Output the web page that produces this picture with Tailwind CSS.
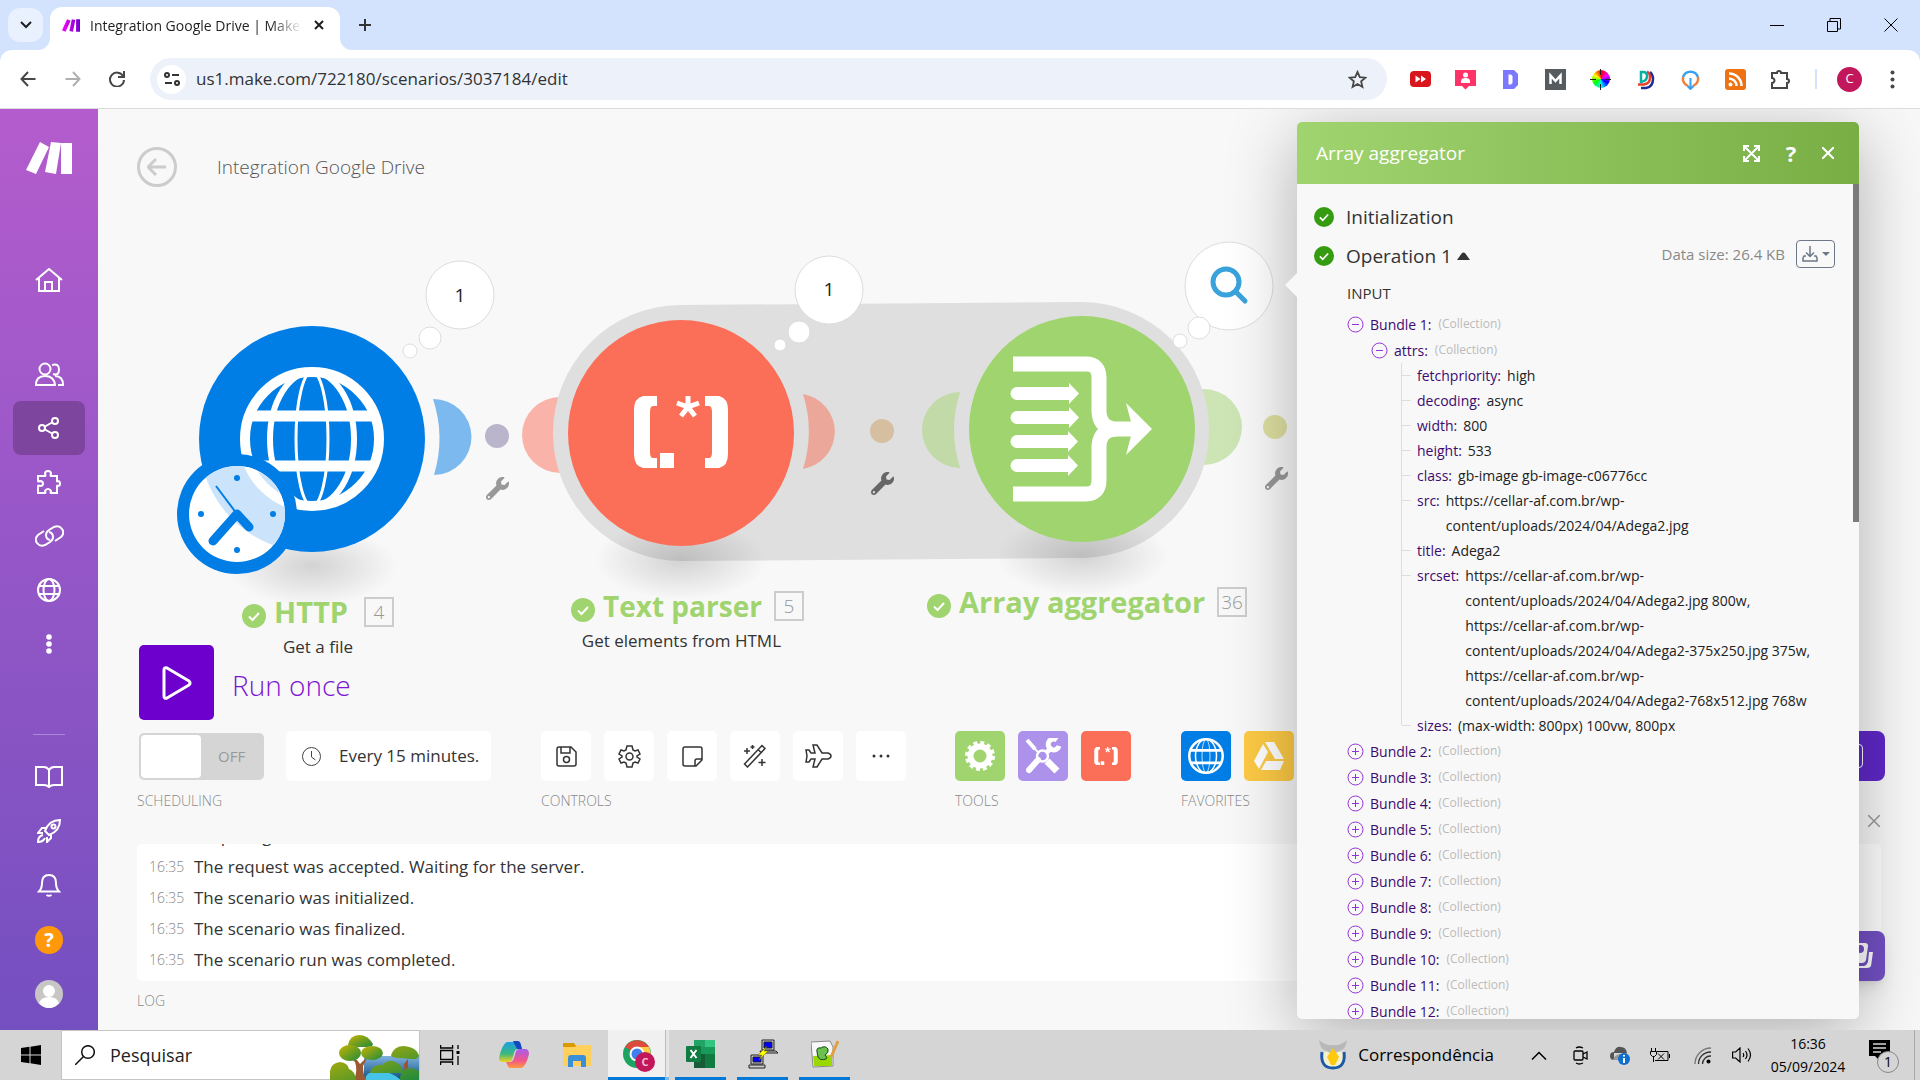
<!DOCTYPE html>
<html lang="en">
<head>
  <meta charset="UTF-8" />
  <title>Integration Google Drive | Make</title>
  <script src="https://cdn.jsdelivr.net/npm/@tailwindcss/browser@4"></script>
</head>
<body class="h-screen flex flex-col overflow-hidden bg-[#d3e3fd] text-[#333] font-['Open_Sans','Noto_Sans',sans-serif]">

  <!-- Shared symbols -->
  <svg class="hidden">
    <symbol id="check" viewBox="0 0 24 24"><circle cx="12" cy="12" r="12" fill="currentColor"/><path d="M7 12.500l3.500 3.500 6.500-7" fill="none" stroke="#fff" stroke-width="2"/></symbol>
    <symbol id="globe" viewBox="-72 -72 144 144">
      <g fill="none" stroke="#fff"><circle r="67" stroke-width="10"/><ellipse rx="42" ry="67" stroke-width="6"/><ellipse rx="16" ry="67" stroke-width="3"/><path d="M-62-23H62M-62 27H62" stroke-width="11"/></g>
    </symbol>
    <symbol id="parser" viewBox="-47 -36 94 72">
      <g fill="#fff"><path d="M-24-36H-38Q-47-34-47-22V22Q-47 34-38 36H-24V26H-28Q-31 26-31 20V-20Q-31-26-28-26H-24z"/><path d="M24-36H38Q47-34 47-22V22Q47 34 38 36H24V26H28Q31 26 31 20V-20Q31-26 28-26H24z"/><path d="M-21 21h14v15h-14z"/></g>
      <path d="M7-25V-36M7-25L-4-29M7-25L18-29M7-25L0-16M7-25L14-16" stroke="#fff" stroke-width="5" fill="none"/>
    </symbol>
    <symbol id="wrench" viewBox="0 0 512 512"><path fill="currentColor" d="M507.700 109.100c-2.200-9-13.500-12.100-20.100-5.500l-74.400 74.400-67.900-11.300L334 98.900l74.400-74.400c6.600-6.600 3.400-17.900-5.700-20.200-47.400-11.700-99.600.9-136.600 37.900-39.600 39.600-50.500 97.100-34.100 147.200L18.700 402.800c-25 25-25 65.500 0 90.500 25 25 65.500 25 90.500 0l213.200-213.200c50.100 16.700 107.500 5.700 147.400-34.200 37.100-37.100 49.700-89.300 37.900-136.800zM64 472c-13.200 0-24-10.800-24-24s10.700-24 24-24 24 10.700 24 24-10.700 24-24 24z"/></symbol>
  </svg>

  <!-- Tab strip -->
  <header class="h-[50px] shrink-0 flex items-end">
    <button class="ml-2 mb-2 w-[35px] h-[34px] rounded-xl bg-[#e9f0fe] flex items-center justify-center" aria-label="Search tabs">
      <svg class="w-3 h-2" viewBox="0 0 12 8" fill="none" stroke="#1f1f1f" stroke-width="2"><path d="M1 1l5 5 5-5"/></svg>
    </button>
    <div class="relative ml-[7px] w-[290px] h-[43px] pl-3 pr-3 pb-[7px] bg-white rounded-t-xl flex items-center">
      <svg class="w-[18px] h-[13px] shrink-0" viewBox="0 0 46 32"><defs><linearGradient id="mk"><stop offset="0" stop-color="#f0f"/><stop offset="1" stop-color="#6d00cc"/></linearGradient></defs><path fill="url(#mk)" d="M13 0l9 4-13 28-9-4zM25 0l9 2-6 30-9-2zM36 0h10v32H36z"/></svg>
      <span class="ml-[10px] w-[212px] text-[14px] text-[#1f1f1f] whitespace-nowrap overflow-hidden mask-r-from-85%">Integration Google Drive | Make</span>
      <button aria-label="Close tab" class="ml-3"><svg class="w-[10px] h-[10px]" viewBox="0 0 10 10" stroke="#1f1f1f" stroke-width="2"><path d="M1 1l8 8M9 1L1 9"/></svg></button>
      <svg class="absolute -left-3 bottom-0 size-3" viewBox="0 0 12 12" fill="#fff"><path d="M12 0V12H0A12 12 0 0 0 12 0"/></svg>
      <svg class="absolute -right-3 bottom-0 size-3" viewBox="0 0 12 12" fill="#fff"><path d="M0 0V12H12A12 12 0 0 1 0 0"/></svg>
    </div>
    <button aria-label="New tab" class="ml-[18px] mb-[18px]"><svg class="size-[14px]" viewBox="0 0 14 14" stroke="#333" stroke-width="2"><path d="M7 1v12M1 7h12"/></svg></button>
    <div class="ml-auto mb-[18px] mr-[22px] flex items-center gap-[43px]">
      <svg class="size-[14px]" viewBox="0 0 14 14" stroke="#000"><path d="M0 7.500h14"/></svg>
      <svg class="size-[14px]" viewBox="0 0 14 14" stroke="#000" fill="none"><path d="M.5 3.500h10v10h-10zM3 3V.500h10.500V11H11"/></svg>
      <svg class="size-[14px]" viewBox="0 0 14 14" stroke="#000"><path d="M.5.500l13 13M13.500.500l-13 13"/></svg>
    </div>
  </header>

  <!-- Toolbar -->
  <nav class="h-[59px] shrink-0 bg-white rounded-t-xl border-b border-[#dcdcdc] flex items-center pl-5 pr-[25px]">
    <svg class="size-4" viewBox="0 0 16 16" fill="none" stroke="#474747" stroke-width="2"><path d="M15.500 8H1.500M8 1L1.500 8 8 15"/></svg>
    <svg class="size-4 ml-[29px]" viewBox="0 0 16 16" fill="none" stroke="#b0b0b0" stroke-width="2"><path d="M.5 8h14M8 1l6.500 7L8 15"/></svg>
    <svg class="size-4 ml-[28px]" viewBox="0 0 16 16" fill="none" stroke="#474747" stroke-width="2"><path d="M14 5A7 7 0 1 0 15 9"/><path d="M15 0v6H9"/></svg>
    <div class="ml-[25px] flex-1 h-[42px] rounded-full bg-[#ecf1fa] flex items-center pl-[7px] pr-5">
      <span class="size-[29px] rounded-full bg-white flex items-center justify-center">
        <svg class="size-4" viewBox="0 0 16 16" fill="none" stroke="#333" stroke-width="2"><circle cx="3" cy="4" r="2"/><path d="M8 4h7M1 12h7"/><circle cx="13" cy="12" r="2"/></svg>
      </span>
      <input aria-label="Address" class="ml-[10px] flex-1 text-[17px] text-[#333] outline-none" value="us1.make.com/722180/scenarios/3037184/edit" />
      <svg class="size-[19px]" viewBox="0 0 24 24" fill="none" stroke="#474747" stroke-width="2.300"><path d="M12 2.500l2.900 6.500 7 .7-5.300 4.700 1.600 7L12 17.700l-6.200 3.700 1.600-7L2.100 9.700l7-.7z"/></svg>
    </div>
    <div class="ml-[23px] flex items-center gap-[24px]">
      <svg class="size-[21px]" viewBox="0 0 21 21"><rect y="2" width="21" height="16" rx="4" fill="#d8161b"/><path d="M5.500 6.500l5 3.500-5 3.500zM11 6.500l5 3.500-5 3.500z" fill="#fff"/></svg>
      <svg class="size-[21px]" viewBox="0 0 21 21"><path d="M0 1h21v16h-7l-3.500 3.500L7 17H0z" fill="#ff3368"/><circle cx="10.500" cy="6" r="2.500" fill="#fff"/><path d="M6 14v-2q0-3 4.500-3t4.500 3v2z" fill="#fff"/></svg>
      <svg class="size-[21px]" viewBox="0 0 21 21"><path d="M3 1h11l4 4v11l-4 4H3z" fill="#7b78ff"/><path d="M8.500 5.500h2.500l1.500 1.500v7l-1.500 1.500H8.500z" fill="#fff"/></svg>
      <svg class="size-[21px]" viewBox="0 0 21 21"><path d="M0 0h21v21H0z" fill="#555b5f"/><path d="M5.500 15V6.500l5 5.500 5-5.500V15" fill="none" stroke="#fff" stroke-width="2.500"/></svg>
      <span class="relative size-[21px] flex items-center justify-center"><span class="size-[18px] rounded-full bg-[conic-gradient(#f00,#f0f,#00f,#0ff,#0f0,#ff0,#f00)]"></span><svg class="absolute size-[21px]" viewBox="0 0 21 21" stroke="#222"><path d="M10.500 0v6M10.500 15v6M0 10.500h6M15 10.500h6"/></svg></span>
      <svg class="size-[21px]" viewBox="0 0 21 21" fill="none" stroke-width="2.500"><path d="M6 19h5q7-1 7-9 0-4-3-7" stroke="#1c2f98"/><path d="M3 15.500h6q6-1 6-7 0-4-3-6" stroke="#e8402a"/><path d="M6 3h2q4 0 4 4 0 5-6 6z" stroke="#0ab0a0"/></svg>
      <svg class="size-[21px]" viewBox="0 0 21 21" fill="none" stroke-width="2.500"><path d="M3 8A8 8 0 0 1 18 8" stroke="#3aa0f0"/><path d="M3 8q-1 6 5 9M18 8q1 6-5 9" stroke="#f08038"/><path d="M10.500 9v11M7.500 17l3 3 3-3" stroke="#3aa0f0" stroke-width="2"/></svg>
      <svg class="size-[21px]" viewBox="0 0 21 21" fill="none" stroke="#fff" stroke-width="2.500"><rect width="21" height="21" rx="3" fill="#ee7212" stroke="none"/><circle cx="5.500" cy="15.500" r="2" fill="#fff" stroke="none"/><path d="M4 9.500a7.500 7.500 0 0 1 7.500 7.500M4 4.500A12.500 12.500 0 0 1 16.500 17"/></svg>
      <svg class="size-[21px]" viewBox="0 0 21 21" fill="none" stroke="#474747" stroke-width="2"><path d="M2 4h5a2 2 0 1 1 4 0h6v6a2 2 0 1 1 0 4v5H2v-5a2.500 2.500 0 1 0 0-5z"/></svg>
      <span class="w-[2px] h-5 bg-[#d3e3fd] -mr-1"></span>
      <span class="size-[25px] rounded-full bg-[#c2185b] text-white text-[13px] flex items-center justify-center">C</span>
      <svg class="w-[5px] h-[19px] ml-1" viewBox="0 0 5 19" fill="#474747"><circle cx="2.500" cy="2.500" r="2"/><circle cx="2.500" cy="9.500" r="2"/><circle cx="2.500" cy="16.500" r="2"/></svg>
    </div>
  </nav>

  <main class="relative flex-1 min-h-0 flex overflow-hidden bg-[#f8f8f8]">
    <!-- Sidebar -->
    <aside class="w-[98px] shrink-0 flex flex-col items-center pb-[22px] bg-linear-to-b from-[#b45ccd] to-[#744fc0]">
      <svg class="mt-[33px] w-[46px] h-8 shrink-0" viewBox="0 0 46 32" fill="#fff"><path d="M14 0l9 5-13 27-10-4zM25 0l10 1-5 31-11-2zM35 1h11v31H35z"/></svg>
      <div class="mt-[79px] flex flex-col items-center">
        <a href="#" aria-label="Home" class="h-[54px] flex items-center"><svg class="w-7 h-6" viewBox="0 0 28 24" fill="none" stroke="#fff" stroke-width="2"><path d="M1 12L14 1l13 11M4 10v13h20V10M10 23v-9h7v9"/></svg></a>
        <a href="#" aria-label="Team" class="mt-10 h-[54px] flex items-center"><svg class="w-[29px] h-6" viewBox="0 0 29 24" fill="none" stroke="#fff" stroke-width="2"><circle cx="10" cy="7" r="5.500"/><path d="M1 23q0-9 9-9t10 9zM17 3q7-2 7 4.500T18 12M20 14q8 0 8 9h-5"/></svg></a>
        <a href="#" aria-label="Scenarios" class="w-[72px] h-[54px] rounded-lg bg-[#7e459f] flex items-center justify-center"><svg class="w-[22px] h-[22px]" viewBox="0 0 22 22" fill="none" stroke="#fff" stroke-width="2"><circle cx="4" cy="11" r="3"/><circle cx="17" cy="4" r="3"/><circle cx="17" cy="18" r="3"/><path d="M7 9.500l7-4M7 12.500l7 4"/></svg></a>
        <a href="#" aria-label="Templates" class="h-[54px] flex items-center"><svg class="size-6" viewBox="0 0 24 24" fill="none" stroke="#fff" stroke-width="2"><path d="M1 6h7q1 0 0-2 0-3 3-3t3 3q-1 2 0 2h6v5q0 1 1 0 2 0 2 2.500T21 16q-1-1-1 0v7h-6q-1 0 0-2-1-2-3-2t-3 2q1 2 0 2H1v-7q0-1 2 0 3 0 3-2.500T3 11q-2 1-2 0z"/></svg></a>
        <a href="#" aria-label="Connections" class="h-[54px] flex items-center"><svg class="w-[29px] h-[22px]" viewBox="0 0 29 22" fill="none" stroke="#fff" stroke-width="2"><path d="M15 15q-4-1-4-5 0-3 3-5l5-3q5-2 8 2t-1 8l-6 4"/><path d="M14 7q4 1 4 5 0 3-3 5l-5 3q-5 2-8-2t1-8l6-4"/></svg></a>
        <a href="#" aria-label="Webhooks" class="h-[54px] flex items-center"><svg class="size-6" viewBox="0 0 24 24" fill="none" stroke="#fff" stroke-width="2"><circle cx="12" cy="12" r="11"/><ellipse cx="12" cy="12" rx="5.500" ry="11"/><path d="M2 8h20M2 16h20"/></svg></a>
        <a href="#" aria-label="More" class="h-[54px] flex items-center"><svg class="w-[6px] h-5" viewBox="0 0 6 20" fill="#fff"><circle cx="3" cy="3" r="2.800"/><circle cx="3" cy="10" r="2.800"/><circle cx="3" cy="17" r="2.800"/></svg></a>
      </div>
      <div class="mt-auto w-8 border-t border-white/30"></div>
      <div class="mt-[15px] flex flex-col items-center">
        <a href="#" aria-label="Docs" class="h-[54px] flex items-center"><svg class="w-7 h-[22px]" viewBox="0 0 28 22" fill="none" stroke="#fff" stroke-width="2"><path d="M14 4q-2-3-5-3H1v18h8q3 0 5 2 2-2 5-2h8V1h-8q-3 0-5 3v16"/></svg></a>
        <a href="#" aria-label="What's new" class="h-[54px] flex items-center"><svg class="size-6" viewBox="0 0 24 24" fill="none" stroke="#fff" stroke-width="2"><path d="M8 12Q12 1 23 1q0 11-11 15zM9 9H5l-4 5h5M14 15v4l-4 4v-5M6 16q-5 1-5 7 5 0 7-4"/><circle cx="16.500" cy="7.500" r="2"/></svg></a>
        <a href="#" aria-label="Notifications" class="h-[54px] flex items-center"><svg class="size-6" viewBox="0 0 24 24" fill="none" stroke="#fff" stroke-width="2"><path d="M2 18.500q3-3 3-8.500 0-8 7-8t7 8q0 5.500 3 8.500zM9.500 22q2.500 1.500 5 0"/></svg></a>
        <a href="#" class="mt-[14px] size-7 rounded-full bg-[#ff980a] text-white text-[20px] leading-7 font-bold text-center">?</a>
        <svg class="mt-[26px] size-7" viewBox="0 0 28 28"><circle cx="14" cy="14" r="14" fill="#c8c6c5"/><circle cx="14" cy="11" r="6" fill="#fff"/><path d="M4 23q2-6 10-6t10 6q-4 5-10 5T4 23" fill="#fff"/></svg>
      </div>
    </aside>

    <!-- Workspace -->
    <section class="relative flex-1 min-w-0 flex flex-col">

      <!-- Scenario diagram -->
      <svg class="absolute inset-0 size-full">
        <defs>
          <radialGradient id="shade"><stop offset="0" stop-color="#000" stop-opacity=".15"/><stop offset="1" stop-color="#000" stop-opacity="0"/></radialGradient>
          <clipPath id="clockFace"><circle cx="237" cy="514" r="48"/></clipPath>
        </defs>
        <g transform="translate(-98 -109)">
          <circle cx="560" cy="435" r="38" fill="#f9b3a8"/>
          <circle cx="1204" cy="427" r="38" fill="#cde5b5"/>
          <path d="M681 433L1081 430" stroke="#dfdfdf" stroke-width="256" stroke-linecap="round"/>
          <ellipse cx="312" cy="566" rx="86" ry="40" fill="url(#shade)"/>
          <ellipse cx="681" cy="560" rx="86" ry="40" fill="url(#shade)"/>
          <ellipse cx="1082" cy="556" rx="86" ry="40" fill="url(#shade)"/>
          <path d="M433 399A38 38 0 0 1 434 475A126 126 0 0 0 433 399" fill="#7cb9ef"/>
          <path d="M803 394A38 38 0 0 1 803 469A126 126 0 0 0 803 394" fill="#eca79b"/>
          <path d="M960 392A38 38 0 0 0 960 468A126 126 0 0 1 960 392" fill="#c1daa8"/>
          <circle cx="497" cy="436" r="12" fill="#bab5cb"/>
          <circle cx="882" cy="431" r="12" fill="#d6bfa1"/>
          <circle cx="1275" cy="427" r="12" fill="#dedfa0"/>
          <use href="#wrench" x="486" y="477" width="23" height="23" color="#989898"/>
          <use href="#wrench" x="871" y="472" width="23" height="23" color="#666"/>
          <use href="#wrench" x="1265" y="467" width="23" height="23" color="#989898"/>

          <circle cx="312" cy="439" r="113" fill="#007ee5"/>
          <use href="#globe" x="240" y="367" width="144" height="144"/>
          <circle cx="237" cy="514" r="60" fill="#007ee5"/>
          <circle cx="237" cy="514" r="48" fill="#fff"/>
          <g clip-path="url(#clockFace)"><circle cx="312" cy="439" r="113" fill="#cce4fb"/><circle cx="312" cy="439" r="68" fill="none" stroke="#fff" stroke-width="10"/></g>
          <g fill="#007ee5"><circle cx="237" cy="478" r="3"/><circle cx="237" cy="550" r="3"/><circle cx="201" cy="514" r="3"/><circle cx="273" cy="514" r="3"/></g>
          <path d="M213 541L237 514L249 527" fill="none" stroke="#007ee5" stroke-width="9" stroke-linecap="round" stroke-linejoin="round"/>
          <path d="M237 514L216 486" stroke="#007ee5" stroke-width="2"/>

          <circle cx="681" cy="433" r="113" fill="#fb6f58"/>
          <use href="#parser" x="634" y="396" width="94" height="72"/>

          <circle cx="1082" cy="429" r="113" fill="#a0d46f"/>
          <g transform="translate(-2 0)">
            <g fill="none" stroke="#fff">
              <path d="M1015 364H1088Q1101 364 1101 378V412Q1102 429 1120 429H1134M1015 494H1088Q1101 494 1101 480V446Q1102 429 1120 429" stroke-width="15"/>
              <path d="M1019 393.500H1072M1019 417.500H1072M1019 441.500H1071M1019 465.500H1071" stroke-width="13" stroke-linecap="round"/>
            </g>
            <path d="M1128 403L1154 429L1128 455L1133 436V422zM1071 383l10 10.500-10 10.500zM1071 407l10 10.500-10 10.500zM1070 431l10 10.500-10 10.500zM1070 455l10 10.500-10 10.500z" fill="#fff"/>
          </g>

          <!-- Operation bubbles -->
          <g fill="#fff" stroke="#ddd">
            <circle cx="460" cy="295" r="34"/><circle cx="430" cy="338" r="11"/><circle cx="410" cy="351" r="7"/>
            <circle cx="829" cy="290" r="34"/><circle cx="799" cy="332" r="11"/><circle cx="780" cy="345" r="6"/>
            <circle cx="1229" cy="286" r="44"/><circle cx="1199" cy="328" r="11"/><circle cx="1180" cy="341" r="7"/>
          </g>
          <path d="M1236 292L1245 301" stroke="#3aa3dc" stroke-width="5" stroke-linecap="round"/>
          <circle cx="1226" cy="282" r="13" fill="none" stroke="#3aa3dc" stroke-width="5"/>
        </g>
      </svg>
      <span class="absolute left-[352px] top-[172px] w-5 text-center text-[19px] leading-7 text-[#222]">1</span>
      <span class="absolute left-[721px] top-[166px] w-5 text-center text-[19px] leading-7 text-[#222]">1</span>

      <!-- Module labels -->
      <div class="absolute left-[144px] top-[485px] flex flex-col items-center">
        <div class="flex items-center"><svg class="size-6 mt-2 text-[#a0d46f]"><use href="#check"/></svg><b class="ml-2 text-[29px] leading-9 text-[#a0d46f]">HTTP</b><span class="ml-4 w-[30px] h-[30px] border-2 border-[#ccc] text-[19px] leading-[26px] text-center text-[#999] font-light">4</span></div>
        <span class="text-[17px] leading-7 mt-[3px]">Get a file</span>
      </div>
      <div class="absolute left-[473px] top-[479px] flex flex-col items-center">
        <div class="flex items-center"><svg class="size-6 mt-2 text-[#a0d46f]"><use href="#check"/></svg><b class="ml-2 text-[28px] leading-9 text-[#a0d46f]">Text parser</b><span class="ml-3 w-[30px] h-[30px] border-2 border-[#ccc] text-[19px] leading-[26px] text-center text-[#999] font-light">5</span></div>
        <span class="text-[17px] leading-7 mt-[3px] mr-3">Get elements from HTML</span>
      </div>
      <div class="absolute left-[829px] top-[475px] flex items-center"><svg class="size-6 mt-2 text-[#a0d46f]"><use href="#check"/></svg><b class="ml-2 text-[29px] leading-9 text-[#a0d46f]">Array aggregator</b><span class="ml-3 w-[30px] h-[30px] border-2 border-[#ccc] text-[19px] leading-[26px] text-center text-[#999] font-light">36</span></div>

      <!-- Title -->
      <div class="relative mt-[38px] ml-[39px] flex items-center gap-10">
        <button aria-label="Back" class="size-10 rounded-full border-3 border-[#ccc] flex items-center justify-center"><svg class="size-5" viewBox="0 0 20 20" fill="none" stroke="#ccc" stroke-width="3"><path d="M19 10H2M9 2l-8 8 8 8"/></svg></button>
        <h1 class="text-[19px] font-light text-[#555]">Integration Google Drive</h1>
      </div>

      <!-- Run button -->
      <div class="relative mt-auto ml-[41px] flex items-center gap-[18px]">
        <button id="run" aria-labelledby="runLabel" class="size-[75px] rounded-[5px] bg-[#6d00cc] flex items-center justify-center"><svg class="w-[30px] h-[34px]" viewBox="0 0 30 34" fill="none" stroke="#fff" stroke-width="3" stroke-linejoin="round"><path d="M2 4q0-3 3-2l22 13q2 2 0 4L5 32q-3 1-3-2z"/></svg></button>
        <label id="runLabel" for="run" class="mt-1 text-[28px] font-light text-[#7c14d4]">Run once</label>
      </div>

      <!-- Controls -->
      <div class="relative mt-[11px] mx-[39px] flex">
        <div class="w-[404px]">
          <div class="flex items-center gap-[22px] h-[50px] pl-[2px]">
            <button role="switch" aria-checked="false" class="w-[125px] h-[47px] rounded-[5px] bg-[#d5d5d5] p-[2px] flex items-center text-[15px] text-[#999]"><span class="w-[60px] h-[43px] rounded bg-white mr-[17px]"></span>OFF</button>
            <button class="w-[205px] h-[50px] rounded-[5px] bg-white flex items-center pl-4 text-[17px]"><svg class="size-[19px] mr-[18px]" viewBox="0 0 19 19" fill="none" stroke="#444"><circle cx="9.500" cy="9.500" r="9"/><path d="M9.500 4v6l4 3"/></svg>Every 15 minutes.</button>
          </div>
          <p class="mt-2 text-[14px] leading-6 font-light text-[#888]">SCHEDULING</p>
        </div>
        <div class="w-[414px]">
          <div class="flex gap-[13px]">
            <button aria-label="Save" class="size-[50px] rounded-[5px] bg-white flex items-center justify-center"><svg class="size-[21px]" viewBox="0 0 21 21" fill="none" stroke="#333" stroke-width="1.500"><path d="M1 3q0-2 2-2h12l5 5v12q0 2-2 2H3q-2 0-2-2zM5 1v6h9V1"/><circle cx="10.500" cy="13.500" r="3"/></svg></button>
            <button aria-label="Settings" class="size-[50px] rounded-[5px] bg-white flex items-center justify-center"><svg class="size-[23px]" viewBox="0 0 23 23" fill="none" stroke="#333" stroke-width="1.500"><path d="M9 1h5l1 4 2 1 3-1 2 4-3 2v1l3 2-2 4-3-1-2 1-1 4H9l-1-4-2-1-3 1-2-4 3-2v-1L1 9l2-4 3 1 2-1z"/><circle cx="11.500" cy="11.500" r="3.500"/></svg></button>
            <button aria-label="Notes" class="size-[50px] rounded-[5px] bg-white flex items-center justify-center"><svg class="size-[21px]" viewBox="0 0 21 21" fill="none" stroke="#333" stroke-width="1.500"><path d="M3 1h15q2 0 2 2v11l-6 6H3q-2 0-2-2V3q0-2 2-2zM20 13h-5q-2 0-2 2v5"/></svg></button>
            <button aria-label="Auto-align" class="size-[50px] rounded-[5px] bg-white flex items-center justify-center"><svg class="size-6" viewBox="0 0 24 24" fill="none" stroke="#333" stroke-width="1.500"><path d="M1.500 20L19 1.500l3 3L4.500 23zM15 5.500l3 3M4 4v6M1 7h6M9.500 1v4M7.500 3h4M19 15v7M15.500 18.500h7"/></svg></button>
            <button aria-label="Explain flow" class="size-[50px] rounded-[5px] bg-white flex items-center justify-center"><svg class="w-[27px] h-6" viewBox="0 0 27 24" fill="none" stroke="#333" stroke-width="1.500"><path d="M8 1h4l5 8h6q3 1 3 3t-3 3h-6l-5 8H8l2-8H6l-2 3H1l1-6-1-6h3l2 3h4z"/></svg></button>
            <button aria-label="More controls" class="size-[50px] rounded-[5px] bg-white flex items-center justify-center"><svg class="w-[18px] h-1" viewBox="0 0 18 4" fill="#333"><circle cx="2" cy="2" r="1.500"/><circle cx="9" cy="2" r="1.500"/><circle cx="16" cy="2" r="1.500"/></svg></button>
          </div>
          <p class="mt-2 text-[14px] leading-6 font-light text-[#888]">CONTROLS</p>
        </div>
        <div class="w-[226px]">
          <div class="flex gap-[13px]">
            <button aria-label="Flow control" class="size-[50px] rounded-[5px] bg-[#a0d46f] flex items-center justify-center"><svg class="size-[30px]" viewBox="-15 -15 30 30" fill="none" stroke="#fff"><circle r="9.500" stroke-width="6"/><circle r="13" stroke-width="4" stroke-dasharray="3.800 3"/></svg></button>
            <button aria-label="Tools" class="size-[50px] rounded-[5px] bg-[#ac92ea] flex items-center justify-center"><svg class="size-9" viewBox="0 0 36 36" fill="none" stroke="#fff"><path d="M2 2l8 9" stroke-width="4"/><path d="M9 10l5 5" stroke-width="2"/><path d="M22 23l10 10" stroke-width="7"/><path d="M4 32L13 22" stroke-width="6" stroke-linecap="round"/><path d="M22 14l5-5" stroke-width="5"/><path d="M32 2A5.500 5.500 0 1 0 34 8" stroke-width="5"/><circle cx="17.500" cy="18" r="5.500" stroke-width="2.500"/></svg></button>
            <button aria-label="Text parser" class="size-[50px] rounded-[5px] bg-[#fb6f58] flex items-center justify-center"><svg class="w-6 h-[18px]"><use href="#parser"/></svg></button>
          </div>
          <p class="mt-2 text-[14px] leading-6 font-light text-[#888]">TOOLS</p>
        </div>
        <div>
          <div class="flex gap-[13px]">
            <button aria-label="HTTP" class="size-[50px] rounded-[5px] bg-[#007ee5] flex items-center justify-center"><svg class="size-9"><use href="#globe"/></svg></button>
            <button aria-label="Google Drive" class="size-[50px] rounded-[5px] bg-[#fdca45] flex items-center justify-center"><svg class="w-8 h-[28px]" viewBox="0 0 32 28" fill="#fff"><path d="M12 0h9l10 17h-9zM10 2l5 8-9 17-5-8zM13 19h18l-4 9H8z"/></svg></button>
          </div>
          <p class="mt-2 text-[14px] leading-6 font-light text-[#888]">FAVORITES</p>
        </div>
        <button aria-label="Open AI assistant" class="ml-auto -mr-1 size-[50px] pl-1 rounded-lg bg-[#5f28c8] flex items-center"><span class="size-6 border border-white rounded"></span></button>
      </div>

      <!-- Log -->
      <div class="relative mx-[39px] mt-[31px] h-[137px] rounded-[5px] bg-white overflow-hidden flex flex-col justify-end pb-[6px] pl-[12px] text-[17px] leading-[31px]">
        <p class="flex items-center"><time class="w-[45px] text-[14px] font-light text-[#888]">16:35</time>Preparing...</p>
        <p class="flex items-center"><time class="w-[45px] text-[14px] font-light text-[#888]">16:35</time>The request was accepted. Waiting for the server.</p>
        <p class="flex items-center"><time class="w-[45px] text-[14px] font-light text-[#888]">16:35</time>The scenario was initialized.</p>
        <p class="flex items-center"><time class="w-[45px] text-[14px] font-light text-[#888]">16:35</time>The scenario was finalized.</p>
        <p class="flex items-center"><time class="w-[45px] text-[14px] font-light text-[#888]">16:35</time>The scenario run was completed.</p>
      </div>
      <p class="ml-[39px] mt-2 mb-[17px] text-[14px] leading-6 font-light text-[#888]">LOG</p>

      <button aria-label="Close log" class="absolute right-[40px] bottom-[203px]"><svg class="size-[12px]" viewBox="0 0 12 12" stroke="#999" stroke-width="1.500"><path d="M0 0l12 12M12 0L0 12"/></svg></button>
      <button aria-label="Notes" class="absolute right-[35px] bottom-[49px] size-[50px] rounded-lg bg-[#7350c4] shadow-lg flex items-center justify-center"><svg class="size-[26px]" viewBox="0 0 26 26" fill="#fff"><path d="M2 0h16q3 0 3 3l-2 14q-1 3-4 3H2z"/><path d="M22 9h4l-2 14q-1 2-4 2H3v-2h14q3-1 4-4z"/><circle cx="13" cy="6" r="4" fill="#7350c4"/></svg></button>
    </section>

    <!-- Operation details -->
    <section class="absolute right-[61px] top-[13px] bottom-[11px] w-[562px] rounded-[5px] bg-[#f8f8f8] shadow-[0_15px_70px_rgba(0,0,0,0.3)] flex flex-col">
      <svg class="absolute -left-3 top-[151px] w-3 h-6" viewBox="0 0 12 24" fill="#f8f8f8"><path d="M12 0v24L0 12z"/></svg>
      <header class="h-[62px] shrink-0 rounded-t-[5px] bg-linear-to-r from-[#a0d46f] to-[#79ae45] flex items-center pl-[19px] pr-[25px] text-white">
        <h2 class="text-[19px] mr-auto">Array aggregator</h2>
        <button aria-label="Expand"><svg class="size-[17px]" viewBox="0 0 17 17" fill="none" stroke="#fff" stroke-width="2"><path d="M1 6V1h5M11 1h5v5M16 11v5h-5M6 16H1v-5M2 2l13 13M15 2L2 15"/></svg></button>
        <button aria-label="Help" class="ml-[24px] w-[14px] text-[22px] leading-6 font-bold">?</button>
        <button aria-label="Close" class="ml-[24px]"><svg class="size-3" viewBox="0 0 12 12" stroke="#fff" stroke-width="2"><path d="M0 0l12 12M12 0L0 12"/></svg></button>
      </header>
      <div class="absolute right-0 top-[62px] w-[6px] h-[338px] bg-[#7b7b7b]"></div>
      <div class="flex-1 min-h-0 overflow-hidden pl-[17px] pr-6 pt-[13px]">
        <div class="flex items-center h-10 text-[19px]"><svg class="size-5 mr-[12px] text-[#359c11]"><use href="#check"/></svg>Initialization</div>
        <div class="flex items-center h-[38px] text-[19px]">
          <svg class="size-5 mr-[12px] text-[#359c11]"><use href="#check"/></svg>Operation 1
          <svg class="w-[13px] h-2 ml-[5px] mr-auto" viewBox="0 0 13 8" fill="#333"><path d="M0 8L5 1q1.500-1 3 0l5 7z"/></svg>
          <span class="mb-1 text-[15px] text-[#888]">Data size: 26.4 KB</span>
          <button aria-label="Download" class="mb-1 ml-[11px] w-[39px] h-7 rounded border border-[#6c7885] flex items-center justify-center gap-1"><svg class="size-4" viewBox="0 0 16 16" fill="none" stroke="#6c7885" stroke-width="1.500"><path d="M8 0v10M4 6.500l4 4 4-4M4 10H2l-1 2v3h14v-3l-1-2h-2"/></svg><svg class="w-2 h-1" viewBox="0 0 8 4" fill="#6c7885"><path d="M0 0h8L4 4z"/></svg></button>
        </div>
        <div class="ml-[33px] text-[14px]">
          <p class="mt-px text-[15px] leading-[35px]">INPUT</p>
          <div class="h-[26px] flex items-center text-[#3d0a70]">
            <svg class="size-[17px] mr-[6px]" viewBox="0 0 17 17" fill="none" stroke="#9333d6"><circle cx="8.500" cy="8.500" r="7.500"/><path d="M5 8.500h7"/></svg>Bundle 1:<small class="ml-[7px] text-[12px] text-[#bbb]">(Collection)</small>
          </div>
          <div class="ml-6 h-[26px] flex items-center text-[#3d0a70]">
            <svg class="size-[17px] mr-[6px]" viewBox="0 0 17 17" fill="none" stroke="#9333d6"><circle cx="8.500" cy="8.500" r="7.500"/><path d="M5 8.500h7"/></svg>attrs:<small class="ml-[7px] text-[12px] text-[#bbb]">(Collection)</small>
          </div>
          <dl id="attrs" class="ml-[54px] mb-[13px] h-[362px] border-l border-[#ddd] leading-[25px]"></dl>
          <div id="bundles"></div>
        </div>
      </div>
    </section>
  </main>

  <!-- Taskbar -->
  <footer class="h-[50px] shrink-0 bg-[#d5d5d5] flex items-center text-black">
    <button aria-label="Start" class="w-[61px] flex justify-center"><svg class="size-5" viewBox="0 0 20 20"><path d="M0 3l8.500-1.200v7.700H0zM9.500 1.700L20 0v9.500H9.500zM0 10.500h8.500v7.700L0 17zM9.500 10.500H20V20L9.500 18.300z"/></svg></button>
    <div class="w-[359px] h-[50px] border border-[#c4c4c4] bg-white flex items-center pl-[13px]">
      <svg class="size-5" viewBox="0 0 20 20" fill="none" stroke="#111" stroke-width="1.500"><circle cx="13" cy="7" r="6.300"/><path d="M8.500 11.500L0 20"/></svg>
      <input aria-label="Pesquisar" placeholder="Pesquisar" class="ml-[15px] w-[220px] text-[18px] placeholder:text-[#222] outline-none" />
      <svg class="w-[89px] h-[45px] mt-1" viewBox="0 0 89 45">
        <defs><linearGradient id="leaf" x1="0" y1="0" x2="1" y2="1"><stop offset="0" stop-color="#c8b400"/><stop offset="1" stop-color="#1f8a3c"/></linearGradient><linearGradient id="lake" x1="0" y1="0" x2="0" y2="1"><stop offset="0" stop-color="#7fb2e0"/><stop offset="1" stop-color="#0d4d80"/></linearGradient></defs>
        <path d="M34 21h55v24H34z" fill="url(#lake)"/><path d="M35 45q0-8 12-9 14 0 24 9z" fill="#46c4e8"/>
        <path d="M24 45q4-10 1-18l-8-7 10 5 3 4 8-8-5 10q0 8 3 14z" fill="#9c5a33"/><path d="M75 45l-1-16 4-5v21z" fill="#a0522d"/>
        <g fill="url(#leaf)"><path d="M18 10Q20 0 29 0t14 9q0 3-6 3H20q-2 0-2-2z"/><ellipse cx="20" cy="18" rx="11" ry="8"/><ellipse cx="42" cy="18" rx="11" ry="7"/><path d="M0 45V36q1-8 10-9 8 1 9 7 6 2 7 11zM40 38q2-9 12-8 8-8 18 0l4 8zM61 20q3-9 13-9 12 1 15 9 0 5-8 4l-12-1q-8 0-8-3zM70 45q0-12 12-12l7 3v9z"/></g>
      </svg>
    </div>
    <div class="w-[59px] flex justify-center"><svg class="size-5" viewBox="0 0 20 20" fill="none" stroke="#000" stroke-width="1.300"><path d="M.6 0v3h12V0M.6 20v-3h12v3M.6 5.500h12v9H.6zM18 0v4M18 11v9"/><path d="M16.500 6h3v3h-3z" fill="#000" stroke="none"/></svg></div>
    <div class="w-[70px] flex justify-center"><svg class="size-[30px]" viewBox="0 0 30 30"><defs><linearGradient id="cp1" x1="0" y1="0" x2="0" y2="1"><stop offset="0" stop-color="#1a9fe8"/><stop offset=".6" stop-color="#3fb97a"/><stop offset="1" stop-color="#f5d020"/></linearGradient><linearGradient id="cp2" x1="0" y1="0" x2="0" y2="1"><stop offset="0" stop-color="#a65cf0"/><stop offset=".6" stop-color="#f0568c"/><stop offset="1" stop-color="#ff9a3c"/></linearGradient></defs><path d="M8 2h10q3 0 4 4l1 3h-4q-3 0-4 4l-2 7q-1 2-4 2H4q-4 0-4-4Q3 4 8 2z" fill="url(#cp1)"/><path d="M14 1h5q2 0 3 4l1 4h-5z" fill="#1648c0"/><path d="M22 28H12q-3 0-4-4l-1-2h4q3 0 4-4l2-7q1-2 4-2h5q4 0 4 5-3 13-8 14z" fill="url(#cp2)"/></svg></div>
    <div class="w-[55px] mr-1 flex justify-center"><svg class="w-7 h-6" viewBox="0 0 28 24"><path d="M0 0h11l2 3v4H0z" fill="#d99a00"/><path d="M0 4h12l2-2h14v21H0z" fill="#ffd05c"/><path d="M5 24v-9q0-3 3-3h12q3 0 3 3v9h-5v-6h-8v6z" fill="#3a90d8"/></svg></div>
    <div class="w-[57px] h-[50px] bg-[#f0f0f0] border-b-3 border-[#0078d7] flex items-center justify-center">
      <svg class="size-8 ml-1 mt-1" viewBox="0 0 32 32"><circle cx="14" cy="14" r="14" fill="#1da462"/><path d="M14 14L2 7A14 14 0 0 1 26 7z" fill="#dd4b3e"/><path d="M14 7h12q4 9-1 16-4 5-11 5l6-11z" fill="#ffcd41"/><circle cx="14" cy="14" r="7.500" fill="#fff"/><circle cx="14" cy="14" r="5.500" fill="#3f7fee"/><circle cx="22" cy="22" r="10" fill="#c2185b"/><text x="22" y="26" font-size="11" font-weight="bold" text-anchor="middle" fill="#f5c2d5">C</text></svg>
    </div>
    <div class="w-[4px] h-[50px] border-l border-[#bbb] border-b-3 border-b-[#76b9ed] bg-[#e4e4e4]"></div>
    <div class="ml-[6px] w-[51px] h-[50px] border-b-3 border-[#0078d7] flex items-center justify-center"><svg class="w-[30px] h-7" viewBox="0 0 30 28"><path d="M8 0h11v14H8z" fill="#21a366"/><path d="M19 0h10v7H19z" fill="#33c481"/><path d="M19 7h10v7H19zM8 7h11v7H8z" fill="#189a5a"/><path d="M8 14h21v14H8z" fill="#107c41"/><path d="M8 14h11v14H8z" fill="#185c37"/><rect y="6" width="15" height="16" rx="1" fill="#107c41"/><path d="M4.500 10l6 8M10.500 10l-6 8" stroke="#fff" stroke-width="2"/></svg></div>
    <div class="ml-[11px] w-[51px] h-[50px] border-b-3 border-[#0078d7] flex items-center justify-center"><svg class="size-[30px]" viewBox="0 0 30 30" stroke="#222"><path d="M14 1h12v10H14z" fill="#ccc"/><path d="M16 3h8v6h-8z" fill="#00f"/><path d="M12 12h16l2 2H13zM3 16h12v9H3z" fill="#ccc"/><path d="M5 18h8v5H5z" fill="#00f"/><path d="M1 26h16v3H1z" fill="#ccc"/><path d="M19 7l-9 9h4l-3 5 9-9h-4z" fill="#ff0" stroke="#660" stroke-width=".5"/></svg></div>
    <div class="ml-[11px] w-[51px] h-[50px] border-b-3 border-[#0078d7] flex items-center justify-center"><svg class="size-7" viewBox="0 0 28 28"><path d="M0 2l19-1 3 6v19L2 27z" fill="#f8f8f8" stroke="#888"/><path d="M2 16l19-1v11L3 26z" fill="#9bd800"/><path d="M6 12q-1-5 4-4 4-3 7 1 1 4-3 6 3 3 1 4-6 2-8-2z" fill="#6cc04f" stroke="#164a16"/><path d="M27 1l-7 16" stroke="#e0a040" stroke-width="3"/></svg></div>

    <!-- Tray -->
    <div class="ml-auto flex items-center">
      <svg class="w-7 h-[30px]" viewBox="0 0 28 30"><path d="M3 12Q1 28 14 28T25 12" fill="#f4f1d0" stroke="#1c58a5" stroke-width="3"/><path d="M0 0q6 6 14 5 8 1 14-5-1 10-8 11l-6 4-6-4Q1 10 0 0z" fill="#b8b8b8"/><path d="M14 8l6 9-4 8h-4l-4-8z" fill="#ffc90e"/></svg>
      <span class="ml-[11px] text-[17px]">Correspondência</span>
      <svg class="ml-[37px] w-4 h-[9px]" viewBox="0 0 16 9" fill="none" stroke="#000" stroke-width="1.500"><path d="M1 8.500l7-7 7 7"/></svg>
      <svg class="ml-[26px] w-[15px] h-[19px]" viewBox="0 0 15 19" fill="none" stroke="#000" stroke-width="1.300"><rect x="1" y="5" width="9" height="9" rx="1"/><path d="M10 8l4-2v7l-4-2M3 2q3-2 7 0M3 17q3 2 7 0"/></svg>
      <svg class="ml-[22px] w-5 h-[19px]" viewBox="0 0 20 19"><path d="M4 14q-4 0-4-4t4-4q2-6 7-5 5 0 6 6H4z" fill="#555"/><path d="M3 14q1-5 7-6l7-1v7z" fill="#999"/><circle cx="14" cy="13" r="6" fill="#0f6fcf"/><path d="M14 12v5M14 9v1.500" stroke="#fff" stroke-width="2"/></svg>
      <svg class="ml-[20px] w-5 h-[14px]" viewBox="0 0 20 14" fill="none" stroke="#000"><path d="M7 3.500h11v9H5M19.500 6v4M1.500 0v3M5.500 0v3M.5 3.500h6v3l-2 2h-2l-2-2zM3.500 8.500V14M8 5.500l6 6M14 5.500l-6 6"/></svg>
      <svg class="ml-[24px] size-[17px]" viewBox="0 0 17 17" fill="none" stroke="#777" stroke-width="1.300"><path d="M1 17A16 16 0 0 1 17 1"/><path d="M4.500 17A12 12 0 0 1 17 5M8.500 17A8 8 0 0 1 17 9" stroke="#333"/><circle cx="14.500" cy="14.500" r="2" fill="#000" stroke="none"/></svg>
      <svg class="ml-[21px] w-5 h-4" viewBox="0 0 20 16" fill="none" stroke="#000" stroke-width="1.200"><path d="M.6 5h3L8 1v14l-4.400-4h-3zM11 6q1.500 2 0 4M13.500 4q3 4 0 8M16 1.500q5 6.500 0 13"/></svg>
      <div class="ml-[14px] w-[84px] text-center text-[14px] leading-[23px]">16:36<br>05/09/2024</div>
      <div class="relative ml-[19px] mr-[15px] w-[30px] h-9 pt-[3px]">
        <svg class="w-[21px] h-[21px]" viewBox="0 0 21 21"><path d="M0 0h21v16H11v5l-5-5H0z"/><path d="M4 4h13M4 8h13M4 12h8" stroke="#d5d5d5" stroke-width="1.300"/></svg>
        <span class="absolute right-0 bottom-0 size-[22px] rounded-full border border-[#888] bg-[#d5d5d5] text-[14px] leading-5 text-center">1</span>
      </div>
      <span class="w-[6px] h-[50px] border-l border-[#aaa]"></span>
    </div>
  </footer>

  <script>
    const attrs = [
      ["fetchpriority", "high"],
      ["decoding", "async"],
      ["width", "800"],
      ["height", "533"],
      ["class", "gb-image gb-image-c06776cc"],
      ["src", "https://cellar-af.com.br/wp-<br>content/uploads/2024/04/Adega2.jpg"],
      ["title", "Adega2"],
      ["srcset", "https://cellar-af.com.br/wp-<br>content/uploads/2024/04/Adega2.jpg 800w,<br>https://cellar-af.com.br/wp-<br>content/uploads/2024/04/Adega2-375x250.jpg 375w,<br>https://cellar-af.com.br/wp-<br>content/uploads/2024/04/Adega2-768x512.jpg 768w"],
      ["sizes", "(max-width: 800px) 100vw, 800px"],
    ];

    document.getElementById("attrs").innerHTML = attrs.map(([key, value]) => `
      <div class="flex whitespace-nowrap">
        <span class="w-[9px] mt-3 mr-[6px] border-t border-[#ddd]"></span>
        <dt class="text-[#3d0a70]">${key}:</dt>
        <dd class="ml-[6px] text-[#222]">${value}</dd>
      </div>`).join("");

    // Bundle 1 is expanded above, the rest stay collapsed
    let html = "";
    for (let i = 2; i <= 12; i++) {
      html += `
      <div class="h-[26px] flex items-center text-[#3d0a70]">
        <svg class="size-[17px] mr-[6px]" viewBox="0 0 17 17" fill="none" stroke="#9333d6"><circle cx="8.500" cy="8.500" r="7.500"/><path d="M5 8.500h7M8.500 5v7"/></svg>Bundle ${i}:<small class="ml-[7px] text-[12px] text-[#bbb]">(Collection)</small>
      </div>`;
    }
    document.getElementById("bundles").innerHTML = html;
  </script>
</body>
</html>
